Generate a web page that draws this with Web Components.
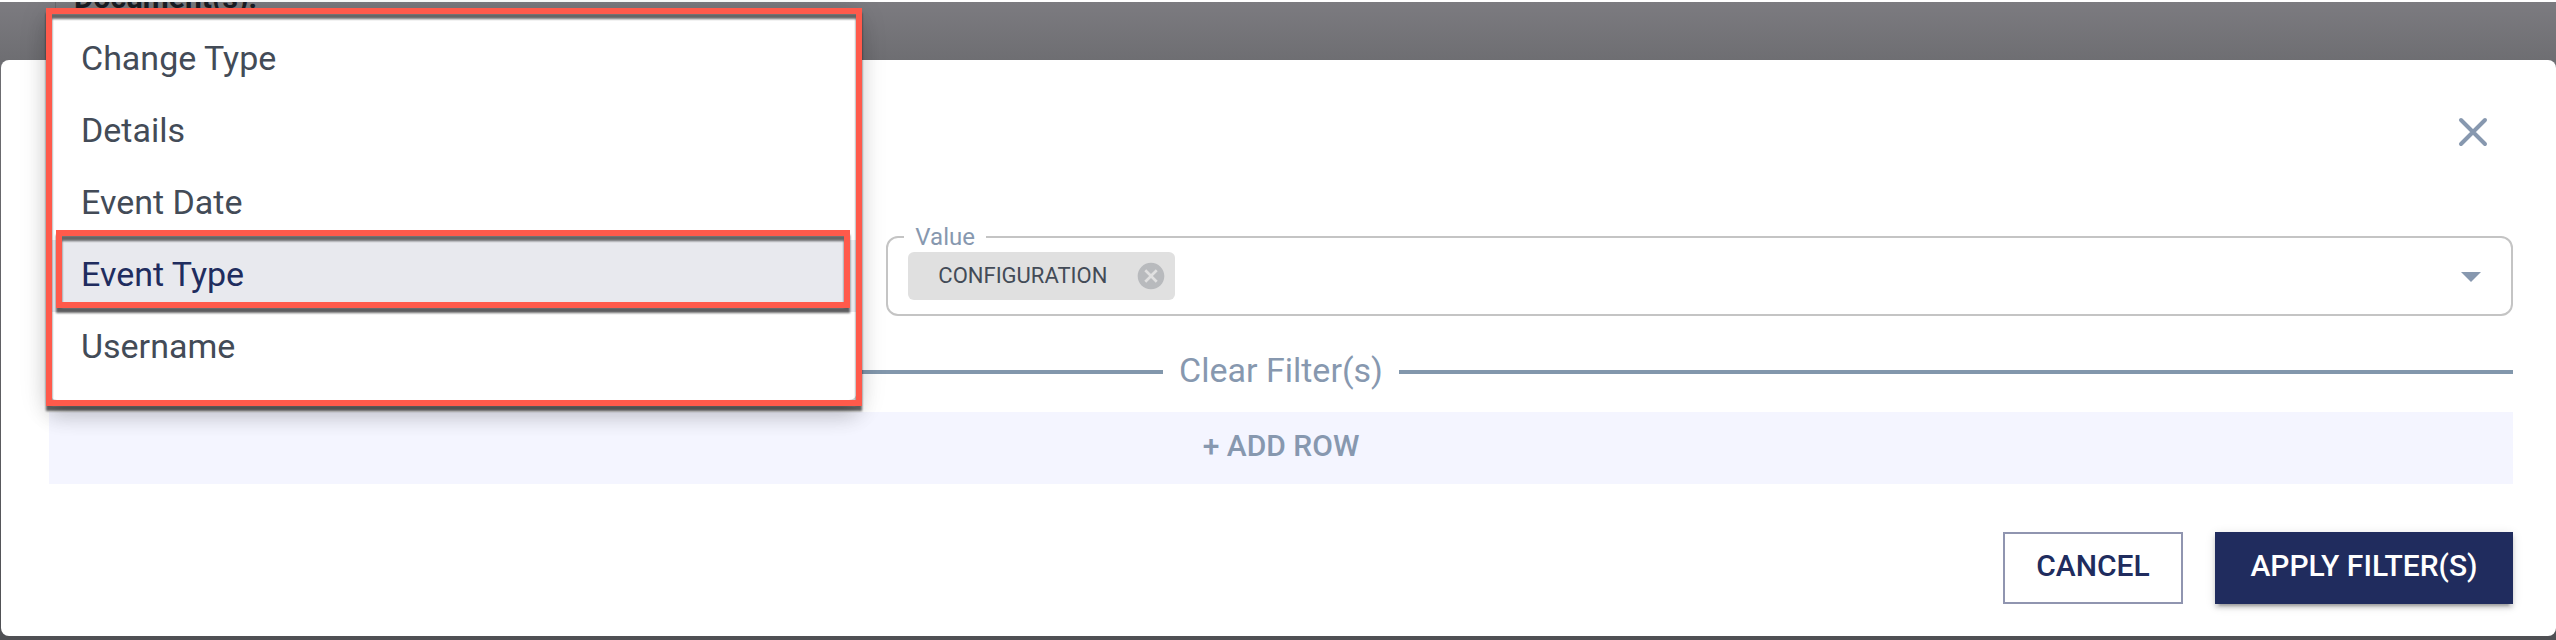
<!DOCTYPE html>
<html lang="en">
<head>
<meta charset="utf-8">
<meta name="viewport" content="width=device-width, initial-scale=1">
<title>Filter</title>
<style>
  :root {
    --navy: #202c5e;
    --slate: #8798af;
    --ink: #434b57;
    --marker: #ff5a4b;
  }
  body {
    margin: 0;
    font: 400 34px/48px Roboto, "Liberation Sans", sans-serif;
    color: var(--ink);
  }
</style>
</head>
<body>
<audit-page heading="Document(s):">
  <filter-dialog>
    <filter-menu slot="field">
      <menu-option>Change Type</menu-option>
      <menu-option>Details</menu-option>
      <menu-option>Event Date</menu-option>
      <menu-option selected>Event Type</menu-option>
      <menu-option>Username</menu-option>
    </filter-menu>
    <chip-select slot="value" label="Value">
      <filter-chip>CONFIGURATION</filter-chip>
    </chip-select>
    <text-divider slot="clear">Clear Filter(s)</text-divider>
    <filter-button slot="add" variant="row">+ ADD ROW</filter-button>
    <filter-button slot="actions" variant="outlined">CANCEL</filter-button>
    <filter-button slot="actions" variant="contained">APPLY FILTER(S)</filter-button>
  </filter-dialog>
</audit-page>

<script>
(function () {
  "use strict";

  function define(name, html, setup) {
    var template = document.createElement("template");
    template.innerHTML = html;
    customElements.define(
      name,
      class extends HTMLElement {
        connectedCallback() {
          if (this.shadowRoot) return;
          var root = this.attachShadow({ mode: "open" });
          root.appendChild(template.content.cloneNode(true));
          if (setup) setup(this, root);
        }
      },
    );
  }

  // The dimmed page under the dialog, scrolled part way past its heading.
  define(
    "audit-page",
    `<style>
      :host { display: block; min-height: 100vh; box-sizing: border-box; border-top: 2px solid #fff;
        background: linear-gradient(#7c7b80, #6e6e72 58px, #626266 50%, #4f5054); }
      header { height: 58px; margin-left: 55px; padding-left: 18px; border-left: 1px solid #6a6a6d;
        box-sizing: border-box; overflow: hidden; }
      h1 { margin: -20px 0 0; font-size: 30px; line-height: 32px; font-weight: 700; color: #1b1e25; }
      main { padding: 0 0 4px 1px; }
    </style>
    <header><h1></h1></header>
    <main><slot></slot></main>`,
    function (host, root) {
      root.querySelector("h1").textContent = host.getAttribute("heading");
    },
  );

  define(
    "filter-dialog",
    `<style>
      :host { display: block; }
      section { padding: 48px 43px 32px 48px; border-radius: 8px; background: #fff; }
      header { display: flex; justify-content: flex-end; padding-right: 16px; }
      .close { display: flex; padding: 0; border: 0; background: none; color: var(--slate); cursor: pointer; }
      .row { display: grid; grid-template-columns: 1fr 2fr; gap: 24px; margin: 69px 0 32px; }
      .add { margin-top: 16px; }
      footer { display: flex; justify-content: flex-end; gap: 32px; margin-top: 48px; }
    </style>
    <section role="dialog" aria-label="Filter">
      <header>
        <button class="close" type="button" aria-label="Close">
          <svg width="48" height="48" viewBox="0 0 48 48" fill="none" stroke="currentColor"
            stroke-width="4" stroke-linecap="round"><path d="M12 12 36 36M36 12 12 36"/></svg>
        </button>
      </header>
      <div class="row"><slot name="field"></slot><slot name="value"></slot></div>
      <slot name="clear"></slot>
      <div class="add"><slot name="add"></slot></div>
      <footer><slot name="actions"></slot></footer>
    </section>`,
  );

  // Opened list that covers its own field and rises over the dialog's edge.
  define(
    "filter-menu",
    `<style>
      :host { display: block; position: relative; }
      .list { position: absolute; z-index: 1; left: 0; right: 5px; bottom: -84px; padding: 16px 0;
        border-radius: 8px; background: #fff;
        box-shadow: 0 10px 10px -6px rgba(0,0,0,.2), 0 16px 20px 2px rgba(0,0,0,.14), 0 6px 28px 4px rgba(0,0,0,.12); }
      .marker { position: absolute; inset: 0 -5px -6px -3px; border: 6px solid var(--marker);
        filter: drop-shadow(0 5px 1px rgba(0,0,0,.6)); pointer-events: none; }
    </style>
    <div class="list" role="listbox" aria-label="Field">
      <slot></slot>
      <div class="marker"></div>
    </div>`,
  );

  define(
    "menu-option",
    `<style>
      :host { display: block; position: relative; padding: 10px 32px 14px; cursor: pointer; }
      :host([selected]) { background: #e8e9ee; color: var(--navy); }
      .marker { display: none; position: absolute; inset: -10px 7px 4px; border: 6px solid var(--marker);
        filter: drop-shadow(0 5px 1px rgba(0,0,0,.6)); pointer-events: none; }
      :host([selected]) .marker { display: block; }
    </style>
    <slot></slot><div class="marker"></div>`,
    function (host) {
      host.setAttribute("role", "option");
      host.setAttribute("aria-selected", String(host.hasAttribute("selected")));
    },
  );

  define(
    "chip-select",
    `<style>
      :host { display: block; min-width: 0; }
      fieldset { min-width: 0; margin: 0; padding: 3px 16px 14px 20px; border: 2px solid #c4c4c4; border-radius: 12px; }
      legend { margin-left: -4px; padding: 0 11px; font-size: 24px; line-height: 24px; color: var(--slate); }
      .control { display: flex; align-items: center; }
      input { flex: 1; min-width: 0; height: 48px; padding: 0 8px; border: 0; outline: 0;
        background: none; font: inherit; color: inherit; box-sizing: border-box; }
      button { display: flex; padding: 0; border: 0; background: none; color: var(--slate); cursor: pointer; }
    </style>
    <fieldset>
      <legend><label for="entry"></label></legend>
      <div class="control">
        <slot></slot>
        <input id="entry" type="text" role="combobox" aria-expanded="false" autocomplete="off">
        <button type="button" aria-label="Open">
          <svg width="48" height="48" viewBox="0 0 24 24" fill="currentColor"><path d="M7 10l5 5 5-5z"/></svg>
        </button>
      </div>
    </fieldset>`,
    function (host, root) {
      root.querySelector("label").textContent = host.getAttribute("label");
    },
  );

  define(
    "filter-chip",
    `<style>
      :host { display: inline-flex; align-items: center; gap: 28px; height: 48px; padding: 0 8px 0 30px;
        border-radius: 6px; background: #e0e0e0; font-size: 22px; box-sizing: border-box; }
      button { display: flex; padding: 0; border: 0; background: none; color: #b8babd; cursor: pointer; }
    </style>
    <span><slot></slot></span>
    <button type="button" aria-label="Remove">
      <svg width="32" height="32" viewBox="0 0 24 24" fill="currentColor"><path d="M12 2C6.47 2 2 6.47 2 12s4.47 10 10 10 10-4.47 10-10S17.53 2 12 2zm5 13.59L15.59 17 12 13.41 8.41 17 7 15.59 10.59 12 7 8.41 8.41 7 12 10.59 15.59 7 17 8.41 13.41 12z"/></svg>
    </button>`,
  );

  define(
    "text-divider",
    `<style>
      :host { display: flex; align-items: center; gap: 16px; color: var(--slate); }
      :host::before, :host::after { content: ""; flex: 1; height: 4px; background: #8297ac; }
      button { padding: 0 0 4px; border: 0; background: none; font: inherit; line-height: 44px; color: inherit; cursor: pointer; }
    </style>
    <button type="button"><slot></slot></button>`,
  );

  define(
    "filter-button",
    `<style>
      :host { display: block; }
      button { width: 100%; height: 72px; padding: 0 30px 4px; border: 0; border-radius: 0;
        font: inherit; font-size: 30px; font-weight: 500; cursor: pointer; }
      :host([variant="row"]) button { background: #f4f5ff; color: var(--slate); }
      :host([variant="outlined"]) button { min-width: 180px; border: 2px solid #9095b0; background: #fff; color: var(--navy); }
      :host([variant="contained"]) button { min-width: 298px; background: var(--navy); color: #fff;
        box-shadow: 0 6px 2px -4px rgba(0,0,0,.2), 0 4px 4px rgba(0,0,0,.14), 0 2px 10px rgba(0,0,0,.12); }
    </style>
    <button type="button"><slot></slot></button>`,
  );
})();
</script>
</body>
</html>
